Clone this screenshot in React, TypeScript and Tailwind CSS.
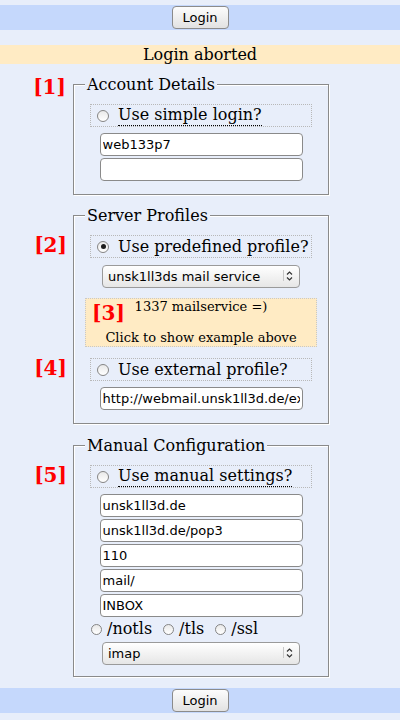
import React from "react";

const Radio = ({ checked = false, className = "" }: { checked?: boolean; className?: string }) => (
  <span
    className={
      "flex shrink-0 items-center justify-center rounded-full border border-[#858585] bg-gradient-to-b from-[#e9e9e9] to-white " +
      className
    }
  >
    {checked && <span className="h-[5px] w-[5px] rounded-full bg-[#1c1c1c]" />}
  </span>
);

const Marker = ({ children, className }: { children: React.ReactNode; className: string }) => (
  <span
    className={
      "absolute whitespace-nowrap text-[20px] font-bold leading-[23px] text-[#ff0000] " + className
    }
  >
    {children}
  </span>
);

const Choice = ({
  label,
  checked = false,
  underline = false,
  marker,
}: {
  label: string;
  checked?: boolean;
  underline?: boolean;
  marker?: string;
}) => (
  <div className="relative mx-[5px] flex h-[23px] items-center border border-dotted border-[#b8b8b8] pl-[6px]">
    {marker && <Marker className="right-full top-[-2px] mr-[24px]">{marker}</Marker>}
    <Radio checked={checked} className="h-[12px] w-[12px]" />
    <span
      className={
        "ml-[9px] text-[16px] leading-[20px]" +
        (underline ? " border-b border-dotted border-black" : "")
      }
    >
      {label}
    </span>
  </div>
);

const Field = ({ value = "", className = "mt-[2px]" }: { value?: string; className?: string }) => (
  <input
    type="text"
    defaultValue={value}
    className={
      "mx-auto block h-[23px] w-[203px] rounded-[4px] border border-[#8a8a8a] bg-white px-[2px] font-['DejaVu_Sans',sans-serif] text-[13px] text-black outline-none " +
      className
    }
  />
);

const Dropdown = ({ value, className = "" }: { value: string; className?: string }) => (
  <div className={"relative mx-auto h-[23px] w-[198px] " + className}>
    <select
      defaultValue={value}
      className="h-full w-full appearance-none rounded-[4px] border border-[#9a9a9a] bg-gradient-to-b from-white to-[#e6e6e6] pl-[5px] font-['DejaVu_Sans',sans-serif] text-[13px] text-black outline-none"
    >
      <option>{value}</option>
    </select>
    <span className="pointer-events-none absolute right-[16px] top-[6px] h-[11px] w-px bg-[#c8c8c8]" />
    <svg
      className="pointer-events-none absolute right-[7px] top-[7px]"
      width="7"
      height="10"
      viewBox="0 0 7 10"
      fill="none"
      stroke="#333"
      strokeWidth="1.2"
    >
      <path d="M1 3.5 3.5 1 6 3.5M1 6.5 3.5 9 6 6.5" />
    </svg>
  </div>
);

const LoginButton = () => (
  <button
    type="submit"
    className="h-[23px] w-[57px] rounded-[4px] border border-[#8b8b8b] bg-gradient-to-b from-[#fcfcfc] to-[#e2e2e2] font-['DejaVu_Sans',sans-serif] text-[13px] text-black"
  >
    Login
  </button>
);

const fieldsetCls =
  "ml-[73px] w-[256px] border border-[#8a8a8a] px-[11px] pt-[10px] shadow-[1px_1px_0_#fff,inset_1px_1px_0_#fff]";
const legendCls = "relative bg-[#e8eefa] px-[2px] text-[16px] leading-[19px]";

export default function App() {
  return (
    <form className="min-h-[720px] bg-[#e8eefa] pt-[5px] font-['DejaVu_Serif',serif] text-black">
      <div className="flex h-[25px] items-center justify-center bg-[#c5d8fc]">
        <LoginButton />
      </div>

      <div className="mt-[15px] h-[19px] bg-[#ffebc4] text-center text-[16px] leading-[19px]">
        Login aborted
      </div>

      {/* account */}
      <fieldset className={fieldsetCls + " mt-[11px] pb-[13px]"}>
        <legend className={legendCls}>
          <Marker className="right-full top-[1px] mr-[19px]">[1]</Marker>
          Account Details
        </legend>
        <Choice label="Use simple login?" underline />
        <Field value="web133p7" className="mt-[6px]" />
        <Field />
      </fieldset>

      {/* profiles */}
      <fieldset className={fieldsetCls + " mt-[11px] pb-[13px]"}>
        <legend className={legendCls}>Server Profiles</legend>
        <Choice label="Use predefined profile?" checked marker="[2]" />
        <Dropdown value="unsk1ll3ds mail service" className="mt-[6px]" />
        <div className="relative mt-[11px] h-[49px] border border-dotted border-[#c8c8c8] bg-[#ffebc4] text-center text-[13px] leading-[15px]">
          <Marker className="left-[6px] top-[3px]">[3]</Marker>
          <div>1337 mailservice =)</div>
          <div className="mt-[16px]">Click to show example above</div>
        </div>
        <div className="mt-[11px]">
          <Choice label="Use external profile?" marker="[4]" />
        </div>
        <Field value="http://webmail.unsk1ll3d.de/external.xml" className="mt-[6px]" />
      </fieldset>

      {/* manual */}
      <fieldset className={fieldsetCls + " mt-[12px] pb-[12px]"}>
        <legend className={legendCls}>Manual Configuration</legend>
        <Choice label="Use manual settings?" underline marker="[5]" />
        <Field value="unsk1ll3d.de" className="mt-[6px]" />
        <Field value="unsk1ll3d.de/pop3" />
        <Field value="110" />
        <Field value="mail/" />
        <Field value="INBOX" />
        <div className="flex h-[24px] items-center text-[16px] leading-[20px]">
          <Radio className="ml-[6px] h-[11px] w-[11px]" />
          <span className="ml-[5px]">/notls</span>
          <Radio className="ml-[11px] h-[11px] w-[11px]" />
          <span className="ml-[5px]">/tls</span>
          <Radio className="ml-[11px] h-[11px] w-[11px]" />
          <span className="ml-[5px]">/ssl</span>
        </div>
        <Dropdown value="imap" />
      </fieldset>

      <div className="mt-[11px] flex h-[25px] items-center justify-center bg-[#c5d8fc]">
        <LoginButton />
      </div>
    </form>
  );
}
